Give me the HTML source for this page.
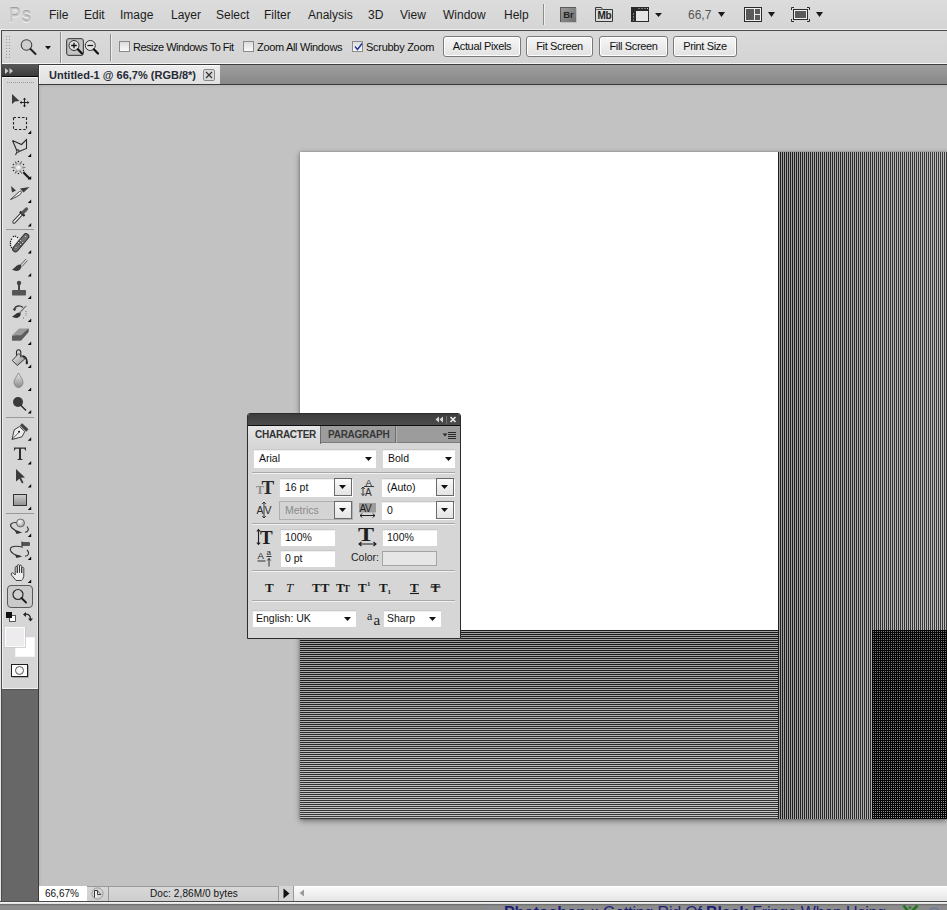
<!DOCTYPE html>
<html><head><meta charset="utf-8">
<style>
*{margin:0;padding:0;box-sizing:border-box}
html,body{width:947px;height:910px;overflow:hidden;background:#c3c3c3;font-family:"Liberation Sans",sans-serif;font-size:12px;color:#1a1a1a}
.a{position:absolute}
svg{position:absolute;overflow:visible}
#menubar{left:0;top:0;width:947px;height:30px;background:linear-gradient(#dcdcdc,#d5d5d5)}
.m{position:absolute;top:8px;font-size:12px;color:#1c1c1c;white-space:nowrap;line-height:14px}
#opts{left:0;top:29px;width:947px;height:35px;background:#d6d6d6;border-top:1px solid #f0f0f0}
#optsin{left:1px;top:30px;width:946px;height:34px;background:linear-gradient(#dadada,#d4d4d4);border-top:1px solid #4c4c4c;border-bottom:1px solid #f4f4f4;box-shadow:inset 1px 0 0 #f2f2f2}
.chk{position:absolute;top:41px;width:11px;height:11px;border:1px solid #8a8a8a;background:linear-gradient(#dcdcdc,#fafafa)}
.ol{position:absolute;top:41px;font-size:11px;color:#111;white-space:nowrap;line-height:13px}
.btn{position:absolute;top:36px;height:21px;border:1px solid #7a7a7a;letter-spacing:-0.35px;border-radius:3px;background:linear-gradient(#f6f6f6,#e2e2e2);font-size:11px;line-height:19px;text-align:center;color:#111;box-shadow:inset 0 0 0 1px #fff}
.vsep{position:absolute;width:2px;background:#8c8c8c;border-right:1px solid #ececec}
#tabbar{left:39px;top:64px;width:908px;height:21px;background:linear-gradient(#9e9e9e,#888);border-top:1px solid #3c3c3c;border-bottom:1px solid #3a3a3a}
#tab{left:39px;top:65px;width:181px;height:19px;background:linear-gradient(#ececec,#e0e0e0);border-top:1px solid #fafafa;border-left:1px solid #fafafa}
#tools{left:1px;top:64px;width:38px;height:837px;background:#676767;border-right:1px solid #3a3a3a}
#toolhead{left:1px;top:64px;width:37px;height:13px;background:linear-gradient(#585858,#3c3c3c);border-bottom:1px solid #080808}
#toolbody{left:2px;top:77px;width:36px;height:612px;background:#d6d6d6;border-left:1px solid #f0f0f0;border-top:1px solid #f4f4f4;border-bottom:1px solid #f0f0f0;box-shadow:0 1px 0 #555,inset -1px 0 0 #e4e4e4}
#edge{left:0;top:30px;width:2px;height:873px;background:#4a4a4a;border-left:1px solid #e8e8e8}
#canvas{left:39px;top:85px;width:908px;height:801px;background:linear-gradient(to right,rgba(0,0,0,.06) 0,rgba(0,0,0,0) 3px),linear-gradient(#b6b6b6 0,#c2c2c2 3px,#c2c2c2 100%)}
#doc{left:300px;top:152px;width:647px;height:667px;box-shadow:0 2px 6px rgba(0,0,0,.42),0 0 2px rgba(0,0,0,.25)}
#white{left:0;top:0;width:478px;height:478px;background:#fff}
#dots{left:572px;top:478px;width:75px;height:189px}
#panel{left:247px;top:413px;width:214px;height:226px;background:#d6d6d6;border:1px solid #2c2c2c;border-radius:3px 3px 0 0;overflow:hidden}
#phead{left:0;top:0;width:212px;height:12px;background:linear-gradient(#3c3c3c,#4c4c4c);border-bottom:1px solid #0e0e0e}
#ptabs{left:0;top:12px;width:212px;height:17px;background:#9c9c9c;border-bottom:1px solid #7c7c7c}
.pt{position:absolute;top:0;height:17px;font-size:10px;font-weight:bold;line-height:17px;letter-spacing:-0.25px;color:#2a2a2a;padding-left:7px;white-space:nowrap}
.fld{position:absolute;background:#fff;border-top:1px solid #c8c8c8;border-left:1px solid #d8d8d8;box-shadow:inset 0 1px 0 #f0f0f0}
.ft{position:absolute;font-size:10.5px;line-height:13px;color:#111;white-space:nowrap}
.dd{position:absolute;width:18px;height:18px;background:linear-gradient(#fafafa,#e4e4e4);border:1px solid #6a6a6a}
.psep{position:absolute;left:4px;width:203px;height:2px;border-top:1px solid #a8a8a8;border-bottom:1px solid #f2f2f2}
#status{left:39px;top:886px;width:908px;height:15px;background:linear-gradient(#d8d8d8,#cecece)}
#bottom{left:0;top:901px;width:947px;height:9px;background:linear-gradient(#484848 0,#484848 1px,#f2f2f2 1px,#f2f2f2 2px,#e2e2e2 2px,#e2e2e2 3px,#606060 3px,#7e7e7e 4px,#8c8c8c 5px)}
</style></head><body>
<!-- MENUBAR -->
<div id="menubar" class="a">
<div class="a" style="left:9px;top:3px;font-size:21px;line-height:24px;color:#c6c6c6;text-shadow:0 1px 0 #f0f0f0,0 -1px 0 #a0a0a0;transform:scaleX(0.82);transform-origin:0 0">P</div><div class="a" style="left:22px;top:3px;font-size:21px;line-height:24px;color:#c6c6c6;text-shadow:0 1px 0 #f0f0f0,0 -1px 0 #a0a0a0;transform:scaleX(0.85);transform-origin:0 0">s</div>
<span class="m" style="left:49px">File</span>
<span class="m" style="left:84px">Edit</span>
<span class="m" style="left:120px">Image</span>
<span class="m" style="left:171px">Layer</span>
<span class="m" style="left:216px">Select</span>
<span class="m" style="left:264px">Filter</span>
<span class="m" style="left:308px">Analysis</span>
<span class="m" style="left:368px">3D</span>
<span class="m" style="left:400px">View</span>
<span class="m" style="left:443px">Window</span>
<span class="m" style="left:504px">Help</span>
<div class="a" style="left:543px;top:4px;width:1px;height:21px;background:#8c8c8c;border-right:1px solid #f0f0f0;width:2px"></div>
<!-- Br -->
<div class="a" style="left:560px;top:7px;width:16px;height:15px;background:linear-gradient(135deg,#9c9c9c,#6c6c6c);border-top:1px solid #5a5a5a;border-left:1px solid #5a5a5a;box-shadow:1px 1px 0 #bdbdbd;font-size:9.5px;font-weight:bold;color:#242424;line-height:14px;text-align:center">Br</div>
<!-- Mb -->
<svg style="left:595px;top:6px" width="19" height="17"><path d="M0.5 1.5H6.5L7.5 3.5H17.5V15.5H0.5Z" fill="#dcdcdc" stroke="#3a3a3a"/><path d="M1 3.5H7" stroke="#3a3a3a" stroke-width=".8"/></svg>
<div class="a" style="left:595px;top:10px;width:19px;font-size:10px;font-weight:bold;color:#1e1e1e;line-height:11px;text-align:center;letter-spacing:-0.3px">Mb</div>
<!-- arrangement -->
<svg style="left:631px;top:7px" width="40" height="16"><rect x="0.5" y="0.5" width="17" height="14" fill="#e6e6e6" stroke="#2a2a2a"/><rect x="1" y="1" width="17" height="3" fill="#2a2a2a"/><rect x="1" y="1" width="4" height="14" fill="#2a2a2a"/><path d="M7.5 1.5h1M10.5 1.5h1M13.5 1.5h1M16 1.5h1M2.5 6.5v1M2.5 9.5v1M2.5 12.5v1" stroke="#cfcfcf" stroke-width="1"/><path d="M24 6h7l-3.5 4z" fill="#1a1a1a"/></svg>
<span class="m" style="left:688px;color:#555">66,7</span>
<svg style="left:718px;top:12px" width="8" height="6"><path d="M0 0h7l-3.5 5z" fill="#1a1a1a"/></svg>
<!-- layout -->
<svg style="left:744px;top:7px" width="40" height="16"><rect x="0.5" y="0.5" width="17" height="14" fill="#f0f0f0" stroke="#2a2a2a"/><rect x="2" y="2" width="8" height="11" fill="#5a5a5a"/><rect x="11" y="2" width="5" height="5" fill="#5a5a5a"/><rect x="11" y="8" width="5" height="5" fill="#5a5a5a"/><path d="M24 5h7l-3.5 5z" fill="#1a1a1a"/></svg>
<!-- screen mode -->
<svg style="left:791px;top:7px" width="40" height="16"><path d="M0.5 3V0.5H3M16 0.5h2.5V3M18.5 12v2.5H16M3 14.5H0.5V12" fill="none" stroke="#2a2a2a"/><rect x="2.5" y="2.5" width="14" height="10" fill="#f0f0f0" stroke="#2a2a2a"/><rect x="4" y="4" width="11" height="7" fill="#5a5a5a"/><path d="M25 5h7l-3.5 5z" fill="#1a1a1a"/></svg>
</div>
<!-- OPTIONS -->
<div id="opts" class="a"></div>
<div id="optsin" class="a"></div>
<svg style="left:6px;top:36px" width="4" height="24"><path d="M0.5 0v24M3.5 0v24" stroke="#9a9a9a" stroke-dasharray="1 2"/></svg>
<svg style="left:19px;top:38px" width="34" height="18"><circle cx="7.5" cy="7" r="5.3" fill="#cfcfcf" stroke="#3a3a3a" stroke-width="1.05"/><path d="M11.5 11 L16.5 16" stroke="#222" stroke-width="2" stroke-linecap="round"/><path d="M26 8h6l-3 3.5z" fill="#111"/></svg>
<div class="vsep" style="left:60px;top:32px;height:31px"></div>
<div class="a" style="left:66px;top:38px;width:18px;height:18px;border:1px solid #4a4a4a;border-radius:3px;background:#c4c4c4;box-shadow:inset 0 0 0 1px #aaa"></div>
<svg style="left:67px;top:39px" width="36" height="18"><circle cx="7" cy="6.5" r="5" fill="#e2e2e2" stroke="#333" stroke-width="1"/><path d="M4.2 6.5h5.6M7 3.7v5.6" stroke="#111" stroke-width="1.3"/><path d="M10.8 10.3 L15 14.5" stroke="#111" stroke-width="2.2" stroke-linecap="round"/><circle cx="23.3" cy="6.5" r="5" fill="#e2e2e2" stroke="#333" stroke-width="1"/><path d="M20.5 6.5h5.6" stroke="#111" stroke-width="1.2"/><path d="M26.8 10.3 L31 14.5" stroke="#111" stroke-width="2.2" stroke-linecap="round"/></svg>
<div class="vsep" style="left:110px;top:34px;height:27px"></div>
<div class="chk" style="left:119px"></div><span class="ol" style="left:133px;letter-spacing:-0.5px">Resize Windows To Fit</span>
<div class="chk" style="left:243px"></div><span class="ol" style="left:257px;letter-spacing:-0.33px">Zoom All Windows</span>
<div class="chk" style="left:352px"></div><span class="ol" style="left:366px;letter-spacing:-0.28px">Scrubby Zoom</span>
<svg style="left:354px;top:43px" width="9" height="8"><path d="M1 3.5 L3.5 6.5 L8 0.5" fill="none" stroke="#22349a" stroke-width="1.4"/></svg>
<div class="btn" style="left:443px;width:78px">Actual Pixels</div>
<div class="btn" style="left:526px;width:67px">Fit Screen</div>
<div class="btn" style="left:599px;width:69px">Fill Screen</div>
<div class="btn" style="left:673px;width:64px">Print Size</div>
<!-- CANVAS -->
<div id="canvas" class="a"></div>
<div id="doc" class="a">
  <div id="white" class="a"></div>
  <svg id="hstripe" style="left:0;top:478px" width="478" height="189" shape-rendering="crispEdges"><rect y="0" width="478" height="1" fill="#181818"/><rect y="1" width="478" height="1" fill="#a0a0a0"/><rect y="2" width="478" height="1" fill="#181818"/><rect y="3" width="478" height="1" fill="#a1a1a1"/><rect y="4" width="478" height="1" fill="#191919"/><rect y="5" width="478" height="1" fill="#a1a1a1"/><rect y="6" width="478" height="1" fill="#191919"/><rect y="7" width="478" height="1" fill="#a1a1a1"/><rect y="8" width="478" height="1" fill="#191919"/><rect y="9" width="478" height="1" fill="#a2a2a2"/><rect y="10" width="478" height="1" fill="#1a1a1a"/><rect y="11" width="478" height="1" fill="#a2a2a2"/><rect y="12" width="478" height="1" fill="#1a1a1a"/><rect y="13" width="478" height="1" fill="#a2a2a2"/><rect y="14" width="478" height="1" fill="#1a1a1a"/><rect y="15" width="478" height="1" fill="#a3a3a3"/><rect y="16" width="478" height="1" fill="#1b1b1b"/><rect y="17" width="478" height="1" fill="#a3a3a3"/><rect y="18" width="478" height="1" fill="#1b1b1b"/><rect y="19" width="478" height="1" fill="#a4a4a4"/><rect y="20" width="478" height="1" fill="#1b1b1b"/><rect y="21" width="478" height="1" fill="#a4a4a4"/><rect y="22" width="478" height="1" fill="#1c1c1c"/><rect y="23" width="478" height="1" fill="#a4a4a4"/><rect y="24" width="478" height="1" fill="#1c1c1c"/><rect y="25" width="478" height="1" fill="#a5a5a5"/><rect y="26" width="478" height="1" fill="#1c1c1c"/><rect y="27" width="478" height="1" fill="#a5a5a5"/><rect y="28" width="478" height="1" fill="#1c1c1c"/><rect y="29" width="478" height="1" fill="#a6a6a6"/><rect y="30" width="478" height="1" fill="#1d1d1d"/><rect y="31" width="478" height="1" fill="#a6a6a6"/><rect y="32" width="478" height="1" fill="#1d1d1d"/><rect y="33" width="478" height="1" fill="#a6a6a6"/><rect y="34" width="478" height="1" fill="#1d1d1d"/><rect y="35" width="478" height="1" fill="#a7a7a7"/><rect y="36" width="478" height="1" fill="#1e1e1e"/><rect y="37" width="478" height="1" fill="#a7a7a7"/><rect y="38" width="478" height="1" fill="#1e1e1e"/><rect y="39" width="478" height="1" fill="#a7a7a7"/><rect y="40" width="478" height="1" fill="#1e1e1e"/><rect y="41" width="478" height="1" fill="#a8a8a8"/><rect y="42" width="478" height="1" fill="#1f1f1f"/><rect y="43" width="478" height="1" fill="#a8a8a8"/><rect y="44" width="478" height="1" fill="#1f1f1f"/><rect y="45" width="478" height="1" fill="#a9a9a9"/><rect y="46" width="478" height="1" fill="#1f1f1f"/><rect y="47" width="478" height="1" fill="#a9a9a9"/><rect y="48" width="478" height="1" fill="#202020"/><rect y="49" width="478" height="1" fill="#a9a9a9"/><rect y="50" width="478" height="1" fill="#202020"/><rect y="51" width="478" height="1" fill="#aaaaaa"/><rect y="52" width="478" height="1" fill="#202020"/><rect y="53" width="478" height="1" fill="#aaaaaa"/><rect y="54" width="478" height="1" fill="#212121"/><rect y="55" width="478" height="1" fill="#ababab"/><rect y="56" width="478" height="1" fill="#212121"/><rect y="57" width="478" height="1" fill="#ababab"/><rect y="58" width="478" height="1" fill="#212121"/><rect y="59" width="478" height="1" fill="#ababab"/><rect y="60" width="478" height="1" fill="#222222"/><rect y="61" width="478" height="1" fill="#acacac"/><rect y="62" width="478" height="1" fill="#222222"/><rect y="63" width="478" height="1" fill="#acacac"/><rect y="64" width="478" height="1" fill="#222222"/><rect y="65" width="478" height="1" fill="#acacac"/><rect y="66" width="478" height="1" fill="#232323"/><rect y="67" width="478" height="1" fill="#adadad"/><rect y="68" width="478" height="1" fill="#232323"/><rect y="69" width="478" height="1" fill="#adadad"/><rect y="70" width="478" height="1" fill="#232323"/><rect y="71" width="478" height="1" fill="#aeaeae"/><rect y="72" width="478" height="1" fill="#232323"/><rect y="73" width="478" height="1" fill="#aeaeae"/><rect y="74" width="478" height="1" fill="#242424"/><rect y="75" width="478" height="1" fill="#aeaeae"/><rect y="76" width="478" height="1" fill="#242424"/><rect y="77" width="478" height="1" fill="#afafaf"/><rect y="78" width="478" height="1" fill="#242424"/><rect y="79" width="478" height="1" fill="#afafaf"/><rect y="80" width="478" height="1" fill="#252525"/><rect y="81" width="478" height="1" fill="#b0b0b0"/><rect y="82" width="478" height="1" fill="#252525"/><rect y="83" width="478" height="1" fill="#b0b0b0"/><rect y="84" width="478" height="1" fill="#252525"/><rect y="85" width="478" height="1" fill="#b0b0b0"/><rect y="86" width="478" height="1" fill="#262626"/><rect y="87" width="478" height="1" fill="#b1b1b1"/><rect y="88" width="478" height="1" fill="#262626"/><rect y="89" width="478" height="1" fill="#b1b1b1"/><rect y="90" width="478" height="1" fill="#262626"/><rect y="91" width="478" height="1" fill="#b1b1b1"/><rect y="92" width="478" height="1" fill="#272727"/><rect y="93" width="478" height="1" fill="#b2b2b2"/><rect y="94" width="478" height="1" fill="#272727"/><rect y="95" width="478" height="1" fill="#b2b2b2"/><rect y="96" width="478" height="1" fill="#272727"/><rect y="97" width="478" height="1" fill="#b3b3b3"/><rect y="98" width="478" height="1" fill="#282828"/><rect y="99" width="478" height="1" fill="#b3b3b3"/><rect y="100" width="478" height="1" fill="#282828"/><rect y="101" width="478" height="1" fill="#b3b3b3"/><rect y="102" width="478" height="1" fill="#282828"/><rect y="103" width="478" height="1" fill="#b4b4b4"/><rect y="104" width="478" height="1" fill="#292929"/><rect y="105" width="478" height="1" fill="#b4b4b4"/><rect y="106" width="478" height="1" fill="#292929"/><rect y="107" width="478" height="1" fill="#b4b4b4"/><rect y="108" width="478" height="1" fill="#292929"/><rect y="109" width="478" height="1" fill="#b5b5b5"/><rect y="110" width="478" height="1" fill="#2a2a2a"/><rect y="111" width="478" height="1" fill="#b5b5b5"/><rect y="112" width="478" height="1" fill="#2a2a2a"/><rect y="113" width="478" height="1" fill="#b6b6b6"/><rect y="114" width="478" height="1" fill="#2a2a2a"/><rect y="115" width="478" height="1" fill="#b6b6b6"/><rect y="116" width="478" height="1" fill="#2b2b2b"/><rect y="117" width="478" height="1" fill="#b6b6b6"/><rect y="118" width="478" height="1" fill="#2b2b2b"/><rect y="119" width="478" height="1" fill="#b7b7b7"/><rect y="120" width="478" height="1" fill="#2b2b2b"/><rect y="121" width="478" height="1" fill="#b7b7b7"/><rect y="122" width="478" height="1" fill="#2b2b2b"/><rect y="123" width="478" height="1" fill="#b8b8b8"/><rect y="124" width="478" height="1" fill="#2c2c2c"/><rect y="125" width="478" height="1" fill="#b8b8b8"/><rect y="126" width="478" height="1" fill="#2c2c2c"/><rect y="127" width="478" height="1" fill="#b8b8b8"/><rect y="128" width="478" height="1" fill="#2c2c2c"/><rect y="129" width="478" height="1" fill="#b9b9b9"/><rect y="130" width="478" height="1" fill="#2d2d2d"/><rect y="131" width="478" height="1" fill="#b9b9b9"/><rect y="132" width="478" height="1" fill="#2d2d2d"/><rect y="133" width="478" height="1" fill="#b9b9b9"/><rect y="134" width="478" height="1" fill="#2d2d2d"/><rect y="135" width="478" height="1" fill="#bababa"/><rect y="136" width="478" height="1" fill="#2e2e2e"/><rect y="137" width="478" height="1" fill="#bababa"/><rect y="138" width="478" height="1" fill="#2e2e2e"/><rect y="139" width="478" height="1" fill="#bbbbbb"/><rect y="140" width="478" height="1" fill="#2e2e2e"/><rect y="141" width="478" height="1" fill="#bbbbbb"/><rect y="142" width="478" height="1" fill="#2f2f2f"/><rect y="143" width="478" height="1" fill="#bbbbbb"/><rect y="144" width="478" height="1" fill="#2f2f2f"/><rect y="145" width="478" height="1" fill="#bcbcbc"/><rect y="146" width="478" height="1" fill="#2f2f2f"/><rect y="147" width="478" height="1" fill="#bcbcbc"/><rect y="148" width="478" height="1" fill="#303030"/><rect y="149" width="478" height="1" fill="#bdbdbd"/><rect y="150" width="478" height="1" fill="#303030"/><rect y="151" width="478" height="1" fill="#bdbdbd"/><rect y="152" width="478" height="1" fill="#303030"/><rect y="153" width="478" height="1" fill="#bdbdbd"/><rect y="154" width="478" height="1" fill="#313131"/><rect y="155" width="478" height="1" fill="#bebebe"/><rect y="156" width="478" height="1" fill="#313131"/><rect y="157" width="478" height="1" fill="#bebebe"/><rect y="158" width="478" height="1" fill="#313131"/><rect y="159" width="478" height="1" fill="#bebebe"/><rect y="160" width="478" height="1" fill="#323232"/><rect y="161" width="478" height="1" fill="#bfbfbf"/><rect y="162" width="478" height="1" fill="#323232"/><rect y="163" width="478" height="1" fill="#bfbfbf"/><rect y="164" width="478" height="1" fill="#323232"/><rect y="165" width="478" height="1" fill="#c0c0c0"/><rect y="166" width="478" height="1" fill="#323232"/><rect y="167" width="478" height="1" fill="#c0c0c0"/><rect y="168" width="478" height="1" fill="#333333"/><rect y="169" width="478" height="1" fill="#c0c0c0"/><rect y="170" width="478" height="1" fill="#333333"/><rect y="171" width="478" height="1" fill="#c1c1c1"/><rect y="172" width="478" height="1" fill="#333333"/><rect y="173" width="478" height="1" fill="#c1c1c1"/><rect y="174" width="478" height="1" fill="#343434"/><rect y="175" width="478" height="1" fill="#c2c2c2"/><rect y="176" width="478" height="1" fill="#343434"/><rect y="177" width="478" height="1" fill="#c2c2c2"/><rect y="178" width="478" height="1" fill="#343434"/><rect y="179" width="478" height="1" fill="#c2c2c2"/><rect y="180" width="478" height="1" fill="#353535"/><rect y="181" width="478" height="1" fill="#c3c3c3"/><rect y="182" width="478" height="1" fill="#353535"/><rect y="183" width="478" height="1" fill="#c3c3c3"/><rect y="184" width="478" height="1" fill="#353535"/><rect y="185" width="478" height="1" fill="#c3c3c3"/><rect y="186" width="478" height="1" fill="#363636"/><rect y="187" width="478" height="1" fill="#c4c4c4"/><rect y="188" width="478" height="1" fill="#363636"/></svg>
  <svg id="vstripe" style="left:478px;top:0" width="169" height="667" shape-rendering="crispEdges"><rect x="0" width="1" height="667" fill="#1e1e1e"/><rect x="1" width="1" height="667" fill="#a0a0a0"/><rect x="2" width="1" height="667" fill="#1e1e1e"/><rect x="3" width="1" height="667" fill="#a0a0a0"/><rect x="4" width="1" height="667" fill="#1f1f1f"/><rect x="5" width="1" height="667" fill="#a1a1a1"/><rect x="6" width="1" height="667" fill="#1f1f1f"/><rect x="7" width="1" height="667" fill="#a1a1a1"/><rect x="8" width="1" height="667" fill="#1f1f1f"/><rect x="9" width="1" height="667" fill="#a2a2a2"/><rect x="10" width="1" height="667" fill="#202020"/><rect x="11" width="1" height="667" fill="#a2a2a2"/><rect x="12" width="1" height="667" fill="#202020"/><rect x="13" width="1" height="667" fill="#a2a2a2"/><rect x="14" width="1" height="667" fill="#202020"/><rect x="15" width="1" height="667" fill="#a2a2a2"/><rect x="16" width="1" height="667" fill="#212121"/><rect x="17" width="1" height="667" fill="#a3a3a3"/><rect x="18" width="1" height="667" fill="#212121"/><rect x="19" width="1" height="667" fill="#a3a3a3"/><rect x="20" width="1" height="667" fill="#212121"/><rect x="21" width="1" height="667" fill="#a4a4a4"/><rect x="22" width="1" height="667" fill="#222222"/><rect x="23" width="1" height="667" fill="#a4a4a4"/><rect x="24" width="1" height="667" fill="#222222"/><rect x="25" width="1" height="667" fill="#a4a4a4"/><rect x="26" width="1" height="667" fill="#222222"/><rect x="27" width="1" height="667" fill="#a4a4a4"/><rect x="28" width="1" height="667" fill="#232323"/><rect x="29" width="1" height="667" fill="#a5a5a5"/><rect x="30" width="1" height="667" fill="#232323"/><rect x="31" width="1" height="667" fill="#a5a5a5"/><rect x="32" width="1" height="667" fill="#232323"/><rect x="33" width="1" height="667" fill="#a6a6a6"/><rect x="34" width="1" height="667" fill="#242424"/><rect x="35" width="1" height="667" fill="#a6a6a6"/><rect x="36" width="1" height="667" fill="#242424"/><rect x="37" width="1" height="667" fill="#a6a6a6"/><rect x="38" width="1" height="667" fill="#242424"/><rect x="39" width="1" height="667" fill="#a6a6a6"/><rect x="40" width="1" height="667" fill="#252525"/><rect x="41" width="1" height="667" fill="#a7a7a7"/><rect x="42" width="1" height="667" fill="#252525"/><rect x="43" width="1" height="667" fill="#a7a7a7"/><rect x="44" width="1" height="667" fill="#252525"/><rect x="45" width="1" height="667" fill="#a8a8a8"/><rect x="46" width="1" height="667" fill="#262626"/><rect x="47" width="1" height="667" fill="#a8a8a8"/><rect x="48" width="1" height="667" fill="#262626"/><rect x="49" width="1" height="667" fill="#a8a8a8"/><rect x="50" width="1" height="667" fill="#262626"/><rect x="51" width="1" height="667" fill="#a8a8a8"/><rect x="52" width="1" height="667" fill="#272727"/><rect x="53" width="1" height="667" fill="#a9a9a9"/><rect x="54" width="1" height="667" fill="#272727"/><rect x="55" width="1" height="667" fill="#a9a9a9"/><rect x="56" width="1" height="667" fill="#272727"/><rect x="57" width="1" height="667" fill="#aaaaaa"/><rect x="58" width="1" height="667" fill="#282828"/><rect x="59" width="1" height="667" fill="#aaaaaa"/><rect x="60" width="1" height="667" fill="#282828"/><rect x="61" width="1" height="667" fill="#aaaaaa"/><rect x="62" width="1" height="667" fill="#282828"/><rect x="63" width="1" height="667" fill="#aaaaaa"/><rect x="64" width="1" height="667" fill="#292929"/><rect x="65" width="1" height="667" fill="#ababab"/><rect x="66" width="1" height="667" fill="#292929"/><rect x="67" width="1" height="667" fill="#ababab"/><rect x="68" width="1" height="667" fill="#292929"/><rect x="69" width="1" height="667" fill="#acacac"/><rect x="70" width="1" height="667" fill="#2a2a2a"/><rect x="71" width="1" height="667" fill="#acacac"/><rect x="72" width="1" height="667" fill="#2a2a2a"/><rect x="73" width="1" height="667" fill="#acacac"/><rect x="74" width="1" height="667" fill="#2a2a2a"/><rect x="75" width="1" height="667" fill="#acacac"/><rect x="76" width="1" height="667" fill="#2b2b2b"/><rect x="77" width="1" height="667" fill="#adadad"/><rect x="78" width="1" height="667" fill="#2b2b2b"/><rect x="79" width="1" height="667" fill="#adadad"/><rect x="80" width="1" height="667" fill="#2b2b2b"/><rect x="81" width="1" height="667" fill="#aeaeae"/><rect x="82" width="1" height="667" fill="#2c2c2c"/><rect x="83" width="1" height="667" fill="#aeaeae"/><rect x="84" width="1" height="667" fill="#2c2c2c"/><rect x="85" width="1" height="667" fill="#aeaeae"/><rect x="86" width="1" height="667" fill="#2c2c2c"/><rect x="87" width="1" height="667" fill="#aeaeae"/><rect x="88" width="1" height="667" fill="#2d2d2d"/><rect x="89" width="1" height="667" fill="#afafaf"/><rect x="90" width="1" height="667" fill="#2d2d2d"/><rect x="91" width="1" height="667" fill="#afafaf"/><rect x="92" width="1" height="667" fill="#2d2d2d"/><rect x="93" width="1" height="667" fill="#b0b0b0"/><rect x="94" width="1" height="667" fill="#2e2e2e"/><rect x="95" width="1" height="667" fill="#b0b0b0"/><rect x="96" width="1" height="667" fill="#2e2e2e"/><rect x="97" width="1" height="667" fill="#b0b0b0"/><rect x="98" width="1" height="667" fill="#2e2e2e"/><rect x="99" width="1" height="667" fill="#b0b0b0"/><rect x="100" width="1" height="667" fill="#2f2f2f"/><rect x="101" width="1" height="667" fill="#b1b1b1"/><rect x="102" width="1" height="667" fill="#2f2f2f"/><rect x="103" width="1" height="667" fill="#b1b1b1"/><rect x="104" width="1" height="667" fill="#2f2f2f"/><rect x="105" width="1" height="667" fill="#b2b2b2"/><rect x="106" width="1" height="667" fill="#303030"/><rect x="107" width="1" height="667" fill="#b2b2b2"/><rect x="108" width="1" height="667" fill="#303030"/><rect x="109" width="1" height="667" fill="#b2b2b2"/><rect x="110" width="1" height="667" fill="#303030"/><rect x="111" width="1" height="667" fill="#b2b2b2"/><rect x="112" width="1" height="667" fill="#313131"/><rect x="113" width="1" height="667" fill="#b3b3b3"/><rect x="114" width="1" height="667" fill="#313131"/><rect x="115" width="1" height="667" fill="#b3b3b3"/><rect x="116" width="1" height="667" fill="#313131"/><rect x="117" width="1" height="667" fill="#b4b4b4"/><rect x="118" width="1" height="667" fill="#323232"/><rect x="119" width="1" height="667" fill="#b4b4b4"/><rect x="120" width="1" height="667" fill="#323232"/><rect x="121" width="1" height="667" fill="#b4b4b4"/><rect x="122" width="1" height="667" fill="#323232"/><rect x="123" width="1" height="667" fill="#b4b4b4"/><rect x="124" width="1" height="667" fill="#333333"/><rect x="125" width="1" height="667" fill="#b5b5b5"/><rect x="126" width="1" height="667" fill="#333333"/><rect x="127" width="1" height="667" fill="#b5b5b5"/><rect x="128" width="1" height="667" fill="#333333"/><rect x="129" width="1" height="667" fill="#b6b6b6"/><rect x="130" width="1" height="667" fill="#343434"/><rect x="131" width="1" height="667" fill="#b6b6b6"/><rect x="132" width="1" height="667" fill="#343434"/><rect x="133" width="1" height="667" fill="#b6b6b6"/><rect x="134" width="1" height="667" fill="#343434"/><rect x="135" width="1" height="667" fill="#b6b6b6"/><rect x="136" width="1" height="667" fill="#353535"/><rect x="137" width="1" height="667" fill="#b7b7b7"/><rect x="138" width="1" height="667" fill="#353535"/><rect x="139" width="1" height="667" fill="#b7b7b7"/><rect x="140" width="1" height="667" fill="#353535"/><rect x="141" width="1" height="667" fill="#b8b8b8"/><rect x="142" width="1" height="667" fill="#363636"/><rect x="143" width="1" height="667" fill="#b8b8b8"/><rect x="144" width="1" height="667" fill="#363636"/><rect x="145" width="1" height="667" fill="#b8b8b8"/><rect x="146" width="1" height="667" fill="#363636"/><rect x="147" width="1" height="667" fill="#b8b8b8"/><rect x="148" width="1" height="667" fill="#373737"/><rect x="149" width="1" height="667" fill="#b9b9b9"/><rect x="150" width="1" height="667" fill="#373737"/><rect x="151" width="1" height="667" fill="#b9b9b9"/><rect x="152" width="1" height="667" fill="#373737"/><rect x="153" width="1" height="667" fill="#bababa"/><rect x="154" width="1" height="667" fill="#383838"/><rect x="155" width="1" height="667" fill="#bababa"/><rect x="156" width="1" height="667" fill="#383838"/><rect x="157" width="1" height="667" fill="#bababa"/><rect x="158" width="1" height="667" fill="#383838"/><rect x="159" width="1" height="667" fill="#bababa"/><rect x="160" width="1" height="667" fill="#393939"/><rect x="161" width="1" height="667" fill="#bbbbbb"/><rect x="162" width="1" height="667" fill="#393939"/><rect x="163" width="1" height="667" fill="#bbbbbb"/><rect x="164" width="1" height="667" fill="#393939"/><rect x="165" width="1" height="667" fill="#bcbcbc"/><rect x="166" width="1" height="667" fill="#3a3a3a"/><rect x="167" width="1" height="667" fill="#bcbcbc"/><rect x="168" width="1" height="667" fill="#3a3a3a"/></svg>
  <svg id="dots" width="75" height="189" shape-rendering="crispEdges"><defs><pattern id="dp" width="2" height="2" patternUnits="userSpaceOnUse" x="0" y="0"><rect width="2" height="2" fill="#040404"/><rect x="1" y="1" width="1" height="1" fill="#8c8c8c"/></pattern><linearGradient id="dg" x1="0" y1="0" x2="0" y2="1"><stop offset="0" stop-color="#000" stop-opacity=".15"/><stop offset="1" stop-color="#000" stop-opacity="0"/></linearGradient></defs><rect width="75" height="189" fill="url(#dp)"/><rect width="75" height="189" fill="url(#dg)"/></svg>
</div>
<!-- TAB BAR -->
<div id="tabbar" class="a"></div>
<div id="tab" class="a"></div>
<span class="a" style="left:49px;top:69px;font-size:11px;font-weight:bold;color:#262a36;line-height:13px;white-space:nowrap" id="tabt">Untitled-1 @ 66,7% (RGB/8*)</span>
<div class="a" style="left:203px;top:69px;width:12px;height:12px;border:1px solid #8a8a8a;border-radius:2px;background:#dadada"></div>
<svg style="left:203px;top:69px" width="12" height="12"><path d="M3 3L9 9M9 3L3 9" stroke="#333" stroke-width="1.2"/></svg>

<!-- TOOLS -->
<div id="tools" class="a"></div>
<div id="toolhead" class="a"></div>
<div id="toolbody" class="a"></div>
<div id="edge" class="a"></div>
<svg style="left:5px;top:68px" width="12" height="8"><path d="M0 0v6l3.5-3zM4.5 0v6l3.5-3z" fill="#d0d0d0"/></svg>
<svg style="left:0;top:0" width="40" height="700">
<defs>
<linearGradient id="g1" x1="0" y1="0" x2="0" y2="1"><stop offset="0" stop-color="#e8e8e8"/><stop offset="1" stop-color="#8a8a8a"/></linearGradient>
<linearGradient id="g2" x1="0" y1="0" x2="0" y2="1"><stop offset="0" stop-color="#cfcfcf"/><stop offset="1" stop-color="#8e8e8e"/></linearGradient>
<radialGradient id="g3" cx="0.4" cy="0.35" r="0.7"><stop offset="0" stop-color="#fafafa"/><stop offset="1" stop-color="#9a9a9a"/></radialGradient>
<path id="tri" d="M-0.2 2.9L3.2 -0.5V2.9Z" fill="#0a0a0a"/>
</defs>
<path d="M7 82.5h27" stroke="#9c9c9c" stroke-dasharray="1 1" />
<!-- move -->
<path d="M12 94L19.5 101L15 101.5L12 104Z" fill="#3c3c3c"/>
<path d="M24.5 98v9M20 102.5h9" stroke="#222" stroke-width="1.1"/><path d="M22.8 99.6L24.5 97.8L26.2 99.6ZM22.8 105.4L24.5 107.2L26.2 105.4ZM21.6 100.8L19.8 102.5L21.6 104.2ZM27.4 100.8L29.2 102.5L27.4 104.2Z" fill="#222"/>
<!-- marquee -->
<rect x="13.5" y="117.5" width="13" height="12" fill="none" stroke="#222" stroke-width="1.1" stroke-dasharray="2.5 1.8"/>
<use href="#tri" x="28" y="131"/>
<!-- lasso -->
<path d="M12.5 140.5L21.5 144.5L26.5 139.5V148.5L19 151.5M12.5 140.5L17 151M16 150.5c1.5-1 3-1 3 .5s-2 1.5-2.5 .5M17 152l-1.5 3" fill="none" stroke="#2a2a2a" stroke-width="1.1"/>
<use href="#tri" x="28" y="154"/>
<!-- magic wand -->
<defs><radialGradient id="gw" cx=".5" cy=".5" r=".5"><stop offset="0" stop-color="#fff"/><stop offset=".3" stop-color="#e0e0e0"/><stop offset="1" stop-color="#3a3a3a"/></radialGradient></defs>
<path d="M11 167.5L16 165.8L14.8 161L18.4 164.3L22 161L20.8 165.8L25.8 167.5L20.8 169.2L22 174L18.4 170.7L14.8 174L16 169.2Z" fill="url(#gw)"/>
<g fill="#222"><circle cx="18.4" cy="161.5" r=".75"/><circle cx="13.5" cy="164.5" r=".75"/><circle cx="23.5" cy="164.5" r=".75"/><circle cx="13.5" cy="170.5" r=".75"/><circle cx="23.5" cy="170.5" r=".75"/><circle cx="18.4" cy="173.5" r=".75"/></g>
<path d="M23.3 172.3L29.5 178.5" stroke="#1e1e1e" stroke-width="2.3"/>
<use href="#tri" x="28" y="176.5"/>
<!-- crop/slice -->
<path d="M11 186L16 190.5L12 192.5Z" fill="#3c3c3c"/>
<path d="M20 188.5L29.5 187L23.5 192.5Z" fill="#3c3c3c"/>
<path d="M10.5 199.5L19.5 191.5C21 190.5 22 192 21 193.5C19 196 14 198 10.5 199.5Z" fill="#f0f0f0" stroke="#333" stroke-width=".9"/>
<use href="#tri" x="28" y="200"/>
<!-- eyedropper -->
<path d="M14 222L22 213.5" stroke="#333" stroke-width="3.4" stroke-linecap="round"/>
<path d="M14 222L22 213.5" stroke="#f4f4f4" stroke-width="1.6" stroke-linecap="round"/>
<path d="M20 211.5L24.5 216" stroke="#2a2a2a" stroke-width="2.4"/>
<path d="M23 212.5L26.5 209" stroke="#555" stroke-width="3.2" stroke-linecap="round"/>
<use href="#tri" x="28" y="223.5"/>
<path d="M6 229.5h28" stroke="#9a9a9a"/>
<!-- healing -->
<path d="M11 248V241C11 237 14 236 17 236.5L19 237.5L13 248Z" fill="#ececec"/>
<g fill="#1a1a1a"><circle cx="11.5" cy="239.3" r=".75"/><circle cx="13.5" cy="236.5" r=".75"/><circle cx="15.5" cy="236.3" r=".75"/><circle cx="17.5" cy="237.5" r=".75"/><circle cx="10.5" cy="241.5" r=".75"/><circle cx="10.5" cy="243.5" r=".75"/><circle cx="10.5" cy="245.5" r=".75"/><circle cx="11.5" cy="247.5" r=".75"/></g>
<path d="M15.5 249L26 236.5" stroke="#2a2a2a" stroke-width="6.6" stroke-linecap="round"/>
<path d="M15.5 249L26 236.5" stroke="#6e6e6e" stroke-width="4.8" stroke-linecap="round"/>
<path d="M18.5 243.5L21.5 247M19 240.5L22.5 244" stroke="#333" stroke-width=".8"/>
<g fill="#e8e8e8"><circle cx="20.5" cy="240.5" r=".6"/><circle cx="18.5" cy="242.5" r=".6"/><circle cx="22.5" cy="242.5" r=".6"/><circle cx="20.5" cy="244.5" r=".6"/><circle cx="25.5" cy="236.5" r=".5"/><circle cx="16" cy="247.5" r=".5"/></g>
<use href="#tri" x="28" y="250.5"/>
<!-- brush -->
<path d="M12 269.5C15 268.5 16 264.5 20 264.5C22 265 22 268 19.5 270C17.5 271.5 14 271 12 269.5Z" fill="#3a3a3a"/>
<path d="M20.5 265L26 259M22 266.5L27.5 260.5" stroke="#555" stroke-width=".9"/>
<use href="#tri" x="28" y="273.5"/>
<!-- stamp -->
<circle cx="19" cy="283" r="2.2" fill="#444"/>
<rect x="18" y="284" width="2" height="6" fill="#444"/>
<rect x="12" y="290" width="14" height="5.5" rx="1" fill="#555"/>
<use href="#tri" x="28" y="296"/>
<!-- history brush -->
<path d="M14 309c2-3.5 6-4 9-1.5" fill="none" stroke="#333" stroke-width="1.3"/><path d="M12.5 309.5L16.5 308L15 311Z" fill="#333"/>
<path d="M12 316.5C15 315.5 16 312.5 19.5 312.5C21.5 313 21 315.5 19 317C17 318.5 14 318 12 316.5Z" fill="#333"/>
<path d="M20 312.5L26.5 305.5" stroke="#555" stroke-width="1.4" stroke-dasharray="1 .6"/>
<path d="M26 311v5M23.5 317.5v1" stroke="#555" stroke-width=".8" stroke-dasharray="1 1.2"/>
<use href="#tri" x="28" y="319"/>
<!-- eraser -->
<path d="M12 340.5L15.5 334.5L28.5 328.5L28.5 332L21 340.5Z" fill="#6a6a6a"/>
<path d="M12 335.5L19 328.5H28.5L21 335.5Z" fill="#9a9a9a"/>
<path d="M12 335.5H21L28.5 328.5V332L21 340.5H12Z" fill="#5c5c5c"/>
<use href="#tri" x="28" y="342"/>
<!-- bucket -->
<defs><linearGradient id="gb" x1="0" y1="0" x2="1" y2="1"><stop offset="0" stop-color="#f4f4f4"/><stop offset="1" stop-color="#8a8a8a"/></linearGradient></defs>
<path d="M12.2 360.5L18.7 353.6L24.9 358.8L17.3 365.5Z" fill="url(#gb)" stroke="#2e2e2e" stroke-width=".9" stroke-linejoin="round"/>
<path d="M16.5 355.5V352C16.5 349 20.5 349 20.8 352.5L20.8 357.5" fill="none" stroke="#2a2a2a" stroke-width="1.1"/>
<path d="M22.5 355.8C25.5 356.5 27 358.5 26.8 362.5" fill="none" stroke="#1e1e1e" stroke-width="1.6"/>
<path d="M25.8 361.5h2v2.2c0 .8-2 .8-2 0Z" fill="#1e1e1e"/>
<use href="#tri" x="28" y="365"/>
<!-- blur drop -->
<path d="M18.5 373C17 376 14 379 14 382.5C14 385 16 387.5 18.5 387.5C21 387.5 23 385 23 382.5C23 379 20 376 18.5 373Z" fill="url(#g1)" stroke="#777" stroke-width=".7"/>
<use href="#tri" x="28" y="388"/>
<!-- dodge -->
<circle cx="18" cy="402" r="5" fill="#3a3a3a"/>
<path d="M20.5 405L26 410.5" stroke="#222" stroke-width="1.3"/>
<use href="#tri" x="28" y="410.5"/>
<path d="M6 417.5h28" stroke="#9a9a9a"/>
<!-- pen -->
<path d="M12 439.5L14.2 429.8L19.5 426.5L24.8 431.5L22 436.8Z" fill="#ececec" stroke="#2e2e2e" stroke-width=".9" stroke-linejoin="round"/>
<path d="M21 424.3L27.4 430.5" stroke="#444" stroke-width="3.2"/>
<path d="M12.3 439L18.8 432.5" stroke="#333" stroke-width=".8"/><circle cx="19" cy="431.8" r="1" fill="#111"/>
<use href="#tri" x="28" y="437.8"/>
<!-- type -->
<path d="M14 447.5H26V450.5H25.2L24.5 448.8H21V458.8L22.5 459.3V460H17.5V459.3L19 458.8V448.8H15.5L14.8 450.5H14Z" fill="#2e2e2e"/>
<use href="#tri" x="28" y="461.5"/>
<!-- path select -->
<path d="M16 469L25 477.5L21 477.8L23.5 482.5L22 483.5L19.5 478.8L16 481.5Z" fill="#3a3a3a"/>
<use href="#tri" x="28" y="484.5"/>
<!-- rectangle -->
<rect x="13.5" y="494.5" width="13" height="11" fill="url(#g2)" stroke="#333" stroke-width="1"/>
<use href="#tri" x="28" y="507"/>
<path d="M6 513.5h28" stroke="#9a9a9a"/>
<!-- 3d rotate -->
<path d="M17 522.5C11 522 9 525 12 528C14 530 17 531.5 20 532.3M25 532.3C28 532 29.5 529.5 27 526.5" fill="none" stroke="#333" stroke-width="1.1"/>
<path d="M15 530.8L22.5 532.5L16.5 534Z" fill="#333"/>
<circle cx="20.5" cy="523" r="4" fill="url(#g3)" stroke="#555" stroke-width=".8"/>
<use href="#tri" x="28" y="534"/>
<!-- 3d orbit -->
<rect x="22" y="542" width="8" height="4" rx="1" fill="#555"/><path d="M22 541.5v5" stroke="#333" stroke-width="1.2"/>
<path d="M23 547.3C16 545.5 9 546 10.5 550.5C11.5 553 16 555.5 20.5 556.3M25 556.3C28.5 556 30 553 27 550" fill="none" stroke="#333" stroke-width="1.1"/>
<path d="M15 554.8L22.5 556.5L16.5 558Z" fill="#333"/>
<use href="#tri" x="28" y="557"/>
<!-- hand -->
<path d="M16 580.5L11.5 575C10.5 573.5 12 572 13.5 573.2L15.2 575V567.5C15.2 566 17.3 566 17.3 567.5V573V565.8C17.3 564.3 19.5 564.3 19.5 565.8V572.5V566.3C19.5 564.8 21.7 564.8 21.7 566.3V573V568.5C21.7 567 23.8 567 23.8 568.5V575C23.8 577.5 23 579 21.5 580.5Z" fill="#ececec" stroke="#2e2e2e" stroke-width=".9" stroke-linejoin="round"/>
<use href="#tri" x="28" y="580"/>
<!-- zoom selected -->
<rect x="7.5" y="585.5" width="25" height="22" rx="3.5" fill="#cacaca" stroke="#5a5a5a"/>
<circle cx="18" cy="594.5" r="5" fill="#cfcfcf" stroke="#2a2a2a" stroke-width="1.2"/>
<path d="M21.5 598L26 602.5" stroke="#1a1a1a" stroke-width="1.8" stroke-linecap="round"/>
<!-- default colors -->
<rect x="9.5" y="615.5" width="6" height="6" fill="#fff" stroke="#333" stroke-width=".8"/>
<rect x="6" y="612" width="6" height="6" fill="#111"/>
<path d="M25 614.5C28 613.5 30.5 615.5 30.5 619" fill="none" stroke="#222" stroke-width="1.2"/><path d="M23 614.5L26 612V617Z" fill="#222"/><path d="M28 618.5L30.5 621.5L33 618.5Z" fill="#222"/>
<!-- swatches -->
<rect x="15.5" y="637.5" width="19" height="19" fill="#fff" stroke="#f4f4f4" stroke-width="1"/>
<rect x="5.5" y="627.5" width="19" height="19" fill="#edebed" stroke="#fbfbfb" stroke-width="1"/><path d="M5 647.5h20.5V627" fill="none" stroke="#c8c8c8" stroke-width=".8"/>
<!-- quick mask -->
<rect x="12.5" y="665.5" width="16" height="12" fill="#777"/><rect x="11.5" y="664.5" width="16" height="12" fill="#fdfdfd" stroke="#1e1e1e" stroke-width="1"/>
<circle cx="19.5" cy="670.5" r="4" fill="#fafafa" stroke="#444" stroke-width=".9"/><path d="M17 672.5c1 1.5 4 1.5 5 0" fill="none" stroke="#bbb" stroke-width=".8"/>
</svg>
<div id="panel" class="a">
 <div id="phead" class="a"></div>
 <svg style="left:187px;top:2px" width="24" height="9"><path d="M4 0.5L0.5 3.5L4 6.5ZM8 0.5L4.5 3.5L8 6.5Z" fill="#d8d8d8"/><path d="M11.5 0v8" stroke="#707070"/><path d="M15.5 1L20.5 6M20.5 1L15.5 6" stroke="#e8e8e8" stroke-width="1.7"/></svg>
 <div id="ptabs" class="a"></div>
 <div class="pt" style="left:0;top:12px;width:73px;background:linear-gradient(#e6e6e6,#d8d8d8);border-right:1px solid #6c6c6c;height:18px;color:#333">CHARACTER</div>
 <div class="pt" style="left:74px;top:12px;width:74px;border-right:1px solid #6c6c6c;box-shadow:1px 0 0 #b4b4b4;color:#383838;padding-left:6px">PARAGRAPH</div>
 <svg style="left:194px;top:17px" width="16" height="10"><path d="M0.5 2.5h5l-2.5 3z" fill="#2a2a2a"/><path d="M6 1.5h8M6 3.5h8M6 5.5h8M6 7.5h8" stroke="#2a2a2a" stroke-width="1"/></svg>
 <!-- row font -->
 <div class="fld" style="left:5px;top:35px;width:123px;height:19px"></div>
 <span class="ft" style="left:11px;top:38px">Arial</span>
 <svg style="left:117px;top:43px" width="8" height="5"><path d="M0 0h7l-3.5 4z" fill="#111"/></svg>
 <div class="fld" style="left:134px;top:35px;width:73px;height:19px"></div>
 <span class="ft" style="left:140px;top:38px">Bold</span>
 <svg style="left:197px;top:43px" width="8" height="5"><path d="M0 0h7l-3.5 4z" fill="#111"/></svg>
 <div class="psep" style="top:58px"></div>
 <!-- row 1 -->
 <div class="fld" style="left:31px;top:64px;width:74px;height:19px"></div>
 <span class="ft" style="left:37px;top:67px">16 pt</span>
 <div class="dd" style="left:86px;top:64px"></div>
 <svg style="left:91px;top:71px" width="8" height="5"><path d="M0 0h7l-3.5 4z" fill="#111"/></svg>
 <div class="fld" style="left:133px;top:64px;width:74px;height:19px"></div>
 <span class="ft" style="left:139px;top:67px">(Auto)</span>
 <div class="dd" style="left:188px;top:64px"></div>
 <svg style="left:193px;top:71px" width="8" height="5"><path d="M0 0h7l-3.5 4z" fill="#111"/></svg>
 <!-- row 2 -->
 <div class="fld" style="left:31px;top:87px;width:74px;height:19px;background:#d4d4d4;border:1px solid #b0b0b0;box-shadow:none"></div>
 <span class="ft" style="left:37px;top:90px;color:#8a8a8a">Metrics</span>
 <div class="dd" style="left:86px;top:87px"></div>
 <svg style="left:91px;top:94px" width="8" height="5"><path d="M0 0h7l-3.5 4z" fill="#111"/></svg>
 <div class="fld" style="left:133px;top:87px;width:74px;height:19px"></div>
 <span class="ft" style="left:139px;top:90px">0</span>
 <div class="dd" style="left:188px;top:87px"></div>
 <svg style="left:193px;top:94px" width="8" height="5"><path d="M0 0h7l-3.5 4z" fill="#111"/></svg>
 <div class="psep" style="top:109px"></div>
 <!-- row 3 -->
 <div class="fld" style="left:32px;top:115px;width:55px;height:17px"></div>
 <span class="ft" style="left:37px;top:117px">100%</span>
 <div class="fld" style="left:134px;top:115px;width:55px;height:17px"></div>
 <span class="ft" style="left:139px;top:117px">100%</span>
 <!-- row 4 -->
 <div class="fld" style="left:32px;top:136px;width:55px;height:17px"></div>
 <span class="ft" style="left:37px;top:138px">0 pt</span>
 <span class="ft" style="left:103px;top:137px;color:#222">Color:</span>
 <div class="a" style="left:134px;top:137px;width:55px;height:15px;background:#e6e6e6;border:1px solid #a4a4a4"></div>
 <div class="psep" style="top:156px"></div>
 <div class="psep" style="top:186px"></div>
 <!-- row lang -->
 <div class="fld" style="left:4px;top:196px;width:104px;height:17px"></div>
 <span class="ft" style="left:8px;top:198px">English: UK</span>
 <svg style="left:96px;top:203px" width="8" height="5"><path d="M0 0h7l-3.5 4z" fill="#111"/></svg>
 <div class="fld" style="left:135px;top:196px;width:58px;height:17px"></div>
 <span class="ft" style="left:139px;top:198px">Sharp</span>
 <svg style="left:181px;top:203px" width="8" height="5"><path d="M0 0h7l-3.5 4z" fill="#111"/></svg>
 <!-- icons -->
 <svg style="left:0;top:0" width="212" height="224" font-family="Liberation Serif" font-weight="bold">
  <text x="8" y="79.5" font-size="12" fill="#8c8c8c">T</text><text x="13.5" y="79.5" font-size="19" fill="#2a2a2a">T</text>
  <g font-family="Liberation Sans" font-weight="normal" fill="#2a2a2a">
  <text x="117.5" y="71.5" font-size="9.5">A</text>
  <text x="117" y="81.5" font-size="10">A</text>
  <text x="8.5" y="99.5" font-size="10.5">A</text><text x="16.5" y="99.5" font-size="10.5">V</text>
  </g>
  <path d="M115 73v8.5M113.3 75l1.7-2 1.7 2M113.3 79.5l1.7 2 1.7-2M116 72.5h10" stroke="#2a2a2a" stroke-width=".9" fill="none"/>
  <path d="M16 88v16M14.2 90l1.8-2 1.8 2M14.2 102l1.8 2 1.8-2" stroke="#2a2a2a" stroke-width=".9" fill="none"/>
  <rect x="111" y="89" width="17" height="9.5" fill="#9c9c9c"/><text x="111.5" y="97.5" font-size="10" fill="#1e1e1e" font-family="Liberation Sans" font-weight="normal" letter-spacing="-0.5">AV</text><path d="M112 101.5h15M114.3 99.5l-2.3 2 2.3 2M124.7 99.5l2.3 2-2.3 2" stroke="#1e1e1e" stroke-width="1" fill="none"/>
  <path d="M10.5 115.5v15M8.8 117.5l1.7-2 1.7 2M8.8 128.5l1.7 2 1.7-2" stroke="#1e1e1e" stroke-width="1.1" fill="none"/><text x="12" y="130" font-size="19" fill="#1e1e1e">T</text>
  <text x="110" y="127" font-size="21" fill="#1e1e1e" transform="translate(110 127) scale(1.15 0.85) translate(-110 -127)">T</text><path d="M111 130h17M113.5 128l-2.5 2 2.5 2M125.5 128l2.5 2-2.5 2" stroke="#1e1e1e" stroke-width="1.1" fill="none"/>
  <g font-family="Liberation Sans" font-weight="normal" fill="#1e1e1e"><text x="9.5" y="145" font-size="9.5">A</text><text x="18.5" y="141" font-size="8">a</text></g><path d="M9.5 147h8M21 144.5v8M19.3 146.5l1.7-2 1.7 2M18.5 142.5h5" stroke="#1e1e1e" stroke-width=".9" fill="none"/>
  <g fill="#1a1a1a" font-size="13">
  <text x="17" y="177.5">T</text>
  <text x="38" y="177.5" font-style="italic" font-weight="normal">T</text>
  <text x="64" y="177.5">TT</text>
  <text x="88" y="177.5">T</text><text x="95.5" y="177.5" font-size="9.5">T</text>
  <text x="110" y="177.5">T</text><text x="119" y="172" font-size="7">1</text>
  <text x="131" y="177.5">T</text><text x="139.5" y="180" font-size="7">1</text>
  <text x="162" y="177.5">T</text><path d="M162 179.5h9" stroke="#1a1a1a" stroke-width="1.1"/>
  <text x="183" y="177.5">T</text><path d="M182.5 173h10" stroke="#1a1a1a" stroke-width="1.2"/>
  </g>
  <text x="119" y="206" font-size="12" fill="#1a1a1a" font-weight="normal">a</text><text x="125.5" y="211" font-size="15" fill="#1a1a1a" font-weight="normal">a</text>
 </svg>
</div>
<!-- STATUS -->
<div id="status" class="a"></div>
<div class="a" style="left:39px;top:886px;width:908px;height:1px;background:#9a9a9a"></div>
<div class="a" style="left:39px;top:886px;width:48px;height:15px;background:#fff"></div>
<span class="a" style="left:45px;top:888px;font-size:10px;line-height:12px;color:#111">66,67%</span>
<svg style="left:91px;top:887px" width="14" height="14"><circle cx="6.5" cy="6.5" r="5.6" fill="#d6d6d6" stroke="#9a9a9a" stroke-width="1"/><path d="M3.5 10.5V3.5H6.5V7.5H10" fill="none" stroke="#333" stroke-width="1"/><path d="M6.5 4L10 7.5H6.5Z" fill="#f4f4f4" stroke="#333" stroke-width=".8"/><rect x="4" y="4" width="2" height="6" fill="#f0f0f0"/></svg>
<div class="a" style="left:108px;top:886px;width:1px;height:15px;background:#9a9a9a"></div>
<span class="a" style="left:150px;top:888px;font-size:10px;line-height:12px;color:#111;letter-spacing:0.1px">Doc: 2,86M/0 bytes</span>
<div class="a" style="left:278px;top:886px;width:16px;height:15px;background:#d4d4d4;border-left:1px solid #9a9a9a;border-right:1px solid #9a9a9a"></div>
<svg style="left:283px;top:888px" width="8" height="12"><path d="M0.5 0.5V10.5L6.5 5.5Z" fill="#111"/></svg>
<div class="a" style="left:294px;top:886px;width:653px;height:15px;background:linear-gradient(#fafafa,#e6e6e6);border-top:1px solid #fff"></div>
<svg style="left:299px;top:889px" width="6" height="9"><path d="M5 0.5V7.5L0.5 4Z" fill="#9a9a9a"/></svg>
<div id="bottom" class="a"></div>
<div class="a" style="left:486px;top:905px;width:1px;height:5px;background:#7a8aa8"></div>
<div class="a" style="left:504px;top:901px;width:420px;height:9px;overflow:hidden"><span class="a" style="left:0;top:3px;font-size:16px;line-height:18px;color:#1c1f7a;white-space:nowrap;letter-spacing:-0.18px"><b>Photoshop</b> :: Getting Rid Of <b>Black</b> Fringe When Using</span></div>
<svg style="left:902px;top:905px" width="45" height="5"><path d="M1.5 0.5L6 6M15.5 0.5L10 6M8 1.5v2" stroke="#1f7a1f" stroke-width="2.6"/><circle cx="32.5" cy="9" r="6" fill="none" stroke="#6a7c9a" stroke-width="1.6"/></svg>
</body></html>
